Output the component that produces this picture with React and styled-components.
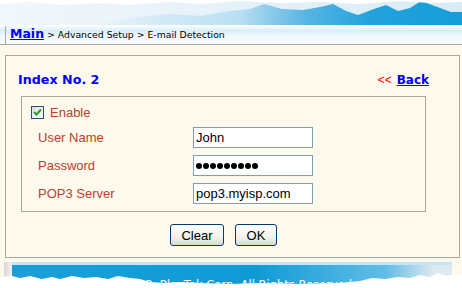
import React from "react";
import styled, { createGlobalStyle } from "styled-components";

const GlobalStyle = createGlobalStyle`
  html, body {
    margin: 0;
    padding: 0;
    background: #ffffff;
    overflow: hidden;
  }
`;

const colors = {
  cream: "#fdf9ec",
  line: "#aca899",
  label: "#b8432b",
  link: "#0000ff",
  inputBorder: "#7f9db9",
};

const Page = styled.div`
  width: 462px;
  height: 288px;
  display: flex;
  flex-direction: column;
  font-family: "Liberation Sans", Arial, sans-serif;
`;

const Header = styled.div`
  position: relative;
  height: 44px;
  border-bottom: 1px solid ${colors.line};
  display: flex;
  align-items: flex-end;
`;

const HeaderArt = styled.svg`
  position: absolute;
  inset: 0;
`;

const Crumbs = styled.div`
  position: relative;
  display: flex;
  align-items: baseline;
  padding: 0 0 3px 4px;
  border-left: 1px solid ${colors.line};
  margin-left: 5px;
`;

const MainLink = styled.a`
  font-family: "DejaVu Sans", Verdana, sans-serif;
  font-weight: bold;
  font-size: 12.5px;
  color: ${colors.link};
  text-decoration: underline;
`;

const CrumbText = styled.span`
  font-family: "DejaVu Sans", Verdana, sans-serif;
  font-size: 9.3px;
  color: #000;
  margin-left: 3px;
`;

const Body = styled.div`
  background: ${colors.cream};
  padding-top: 10px;
  display: flex;
`;

const Frame = styled.div`
  margin-left: 5px;
  width: 455px;
  box-sizing: border-box;
  border: 1px solid ${colors.line};
  padding: 16px 30px 11px 12px;
  display: flex;
  flex-direction: column;
`;

const TitleRow = styled.div`
  display: flex;
  justify-content: space-between;
  align-items: baseline;
  height: 16px;
`;

const Title = styled.span`
  font-family: "DejaVu Sans", Verdana, sans-serif;
  font-weight: bold;
  font-size: 12.7px;
  color: ${colors.link};
`;

const BackLink = styled.span`
  display: flex;
  align-items: baseline;
  gap: 5px;
`;

const Arrows = styled.span`
  font-family: "Liberation Sans", Arial, sans-serif;
  font-size: 12px;
  color: #ff0000;
`;

const BackText = styled.a`
  font-family: "DejaVu Sans", Verdana, sans-serif;
  font-weight: bold;
  font-size: 12px;
  color: ${colors.link};
  text-decoration: underline;
`;

const GroupBox = styled.div`
  margin: 8px 0 0 3px;
  width: 405px;
  box-sizing: border-box;
  border: 1px solid ${colors.line};
  padding: 9px 0 7px 9px;
  display: flex;
  flex-direction: column;
  gap: 7px;
`;

const CheckRow = styled.label`
  display: flex;
  align-items: center;
  gap: 6px;
  height: 13px;
  margin-bottom: 1px;
`;

const CheckBox = styled.span`
  width: 13px;
  height: 13px;
  box-sizing: border-box;
  border: 1px solid #1c5180;
  background: linear-gradient(135deg, #dcdcd7, #ffffff);
  display: flex;
  align-items: center;
  justify-content: center;
`;

const Label = styled.span`
  font-size: 13px;
  color: ${colors.label};
  width: ${({ $width }) => $width || "auto"};
`;

const FieldRow = styled.div`
  display: flex;
  align-items: center;
  height: 21px;
  padding-left: 7px;
`;

const TextInput = styled.input`
  width: 120px;
  height: 21px;
  box-sizing: border-box;
  border: 1px solid ${colors.inputBorder};
  background: #fff;
  padding: 0 2px;
  font-family: "Liberation Sans", Arial, sans-serif;
  font-size: 13px;
  color: #000;
  outline: none;
`;

const PasswordBox = styled.div`
  width: 120px;
  height: 21px;
  box-sizing: border-box;
  border: 1px solid ${colors.inputBorder};
  background: #fff;
  padding: 0 2px;
  display: flex;
  align-items: center;
  gap: 1px;
`;

const Dot = styled.span`
  width: 6px;
  height: 6px;
  border-radius: 50%;
  background: #000;
`;

const ButtonRow = styled.div`
  margin: 12px 0 0 3px;
  width: 405px;
  display: flex;
  justify-content: center;
  gap: 11px;
`;

const Button = styled.button`
  width: ${({ $width }) => $width}px;
  height: 22px;
  box-sizing: border-box;
  border: 1px solid #003c74;
  border-radius: 3px;
  background: linear-gradient(#ffffff, #f3f2ec 60%, #dcd8cb);
  font-family: "Liberation Sans", Tahoma, sans-serif;
  font-size: 13px;
  color: #000;
  padding: 0;
`;

const Footer = styled.div`
  position: relative;
  flex: 1;
  background: ${colors.cream};
  padding-top: 4px;
  display: flex;
  overflow: hidden;
`;

const FooterSide = styled.div`
  width: 8px;
  margin-left: 4px;
  background: linear-gradient(90deg, #d8d8d8, #f2f2f2);
`;

const FooterBand = styled.div`
  width: 440px;
  border-top: 3px solid #c6e6f5;
  background: linear-gradient(90deg, #1c9fd9 0%, #0f9ad6 55%, #62bde6 85%, #dfeaee 96%);
  display: flex;
  justify-content: flex-end;
  padding: 13px 100px 0 0;
  box-sizing: border-box;
`;

const Copyright = styled.span`
  font-family: "DejaVu Sans", Verdana, sans-serif;
  font-size: 11.5px;
  color: #ffffff;
  white-space: nowrap;
`;

const TornEdge = styled.svg`
  position: absolute;
  left: 0;
  bottom: 0;
`;

const fields = [
  { label: "User Name", value: "John" },
  { label: "Password", password: 9 },
  { label: "POP3 Server", value: "pop3.myisp.com" },
];

export default function App() {
  return (
    <Page>
      <GlobalStyle />
      <Header>
        <HeaderArt width="462" height="44" viewBox="0 0 462 44">
          <defs>
            <linearGradient id="sky" x1="0" y1="0" x2="1" y2="0">
              <stop offset="0" stopColor="#f1f7fb" />
              <stop offset="0.6" stopColor="#e3f0f8" />
              <stop offset="1" stopColor="#d8ebf6" />
            </linearGradient>
            <linearGradient id="hills" x1="0" y1="0" x2="462" y2="0" gradientUnits="userSpaceOnUse">
              <stop offset="0.2" stopColor="#eaf4fa" />
              <stop offset="0.52" stopColor="#b9dff2" />
              <stop offset="0.66" stopColor="#58b5e3" />
              <stop offset="0.8" stopColor="#23a2dc" />
              <stop offset="1" stopColor="#169ed9" />
            </linearGradient>
            <linearGradient id="haze" x1="0" y1="0" x2="0" y2="1">
              <stop offset="0" stopColor="#ffffff" />
              <stop offset="0.3" stopColor="#d9eef8" />
              <stop offset="0.55" stopColor="#eef7fb" />
              <stop offset="1" stopColor="#f8fafb" />
            </linearGradient>
          </defs>
          <rect x="0" y="0" width="462" height="26" fill="url(#sky)" />
          <polygon
            points="90,26 130,18 170,14 200,16 230,11 250,9 264,4 282,9 303,10 320,7 333,4 346,11 358,15 374,9 386,5 398,11 410,8 421,1 432,5 451,12 462,12 462,26"
            fill="url(#hills)"
          />
          <rect x="0" y="25" width="462" height="19" fill="url(#haze)" />
          <polygon
            points="0,0 462,0 462,2 430,3 400,1 360,4 320,2 280,3 240,1 200,4 170,2 130,5 100,3 60,5 30,2 0,4"
            fill="#ffffff"
          />
        </HeaderArt>
        <Crumbs>
          <MainLink>Main</MainLink>
          <CrumbText>&gt; Advanced Setup &gt; E-mail Detection</CrumbText>
        </Crumbs>
      </Header>

      <Body>
        <Frame>
          <TitleRow>
            <Title>Index No. 2</Title>
            <BackLink>
              <Arrows>&lt;&lt;</Arrows>
              <BackText>Back</BackText>
            </BackLink>
          </TitleRow>

          <GroupBox>
            <CheckRow>
              <CheckBox>
                <svg width="9" height="9" viewBox="0 0 9 9">
                  <polyline points="1,4 3.5,6.5 8,1.5" fill="none" stroke="#21a121" strokeWidth="2" />
                </svg>
              </CheckBox>
              <Label>Enable</Label>
            </CheckRow>
            {fields.map((f) => (
              <FieldRow key={f.label}>
                <Label $width="155px">{f.label}</Label>
                {f.password ? (
                  <PasswordBox>
                    {Array.from({ length: f.password }).map((_, i) => (
                      <Dot key={i} />
                    ))}
                  </PasswordBox>
                ) : (
                  <TextInput defaultValue={f.value} readOnly />
                )}
              </FieldRow>
            ))}
          </GroupBox>

          <ButtonRow>
            <Button $width={54}>Clear</Button>
            <Button $width={42}>OK</Button>
          </ButtonRow>
        </Frame>
      </Body>

      <Footer>
        <FooterSide />
        <FooterBand>
          <Copyright>Copyright © 2000-2003, PlavTek Corp. All Rights Reserved</Copyright>
        </FooterBand>
        <TornEdge width="462" height="16" viewBox="0 0 462 16">
          <polygon
            points="0,16 0,5 12,4 20,6 30,4 42,7 52,5 60,7 72,4 84,6 96,5 108,7 118,4 130,6 140,7 150,10 165,11 180,10 200,11 230,12 260,11 300,12 340,11 360,9 372,6 385,7 398,5 410,6 420,3 430,5 438,1 446,4 455,2 462,3 462,16"
            fill="#ffffff"
          />
        </TornEdge>
      </Footer>
    </Page>
  );
}
